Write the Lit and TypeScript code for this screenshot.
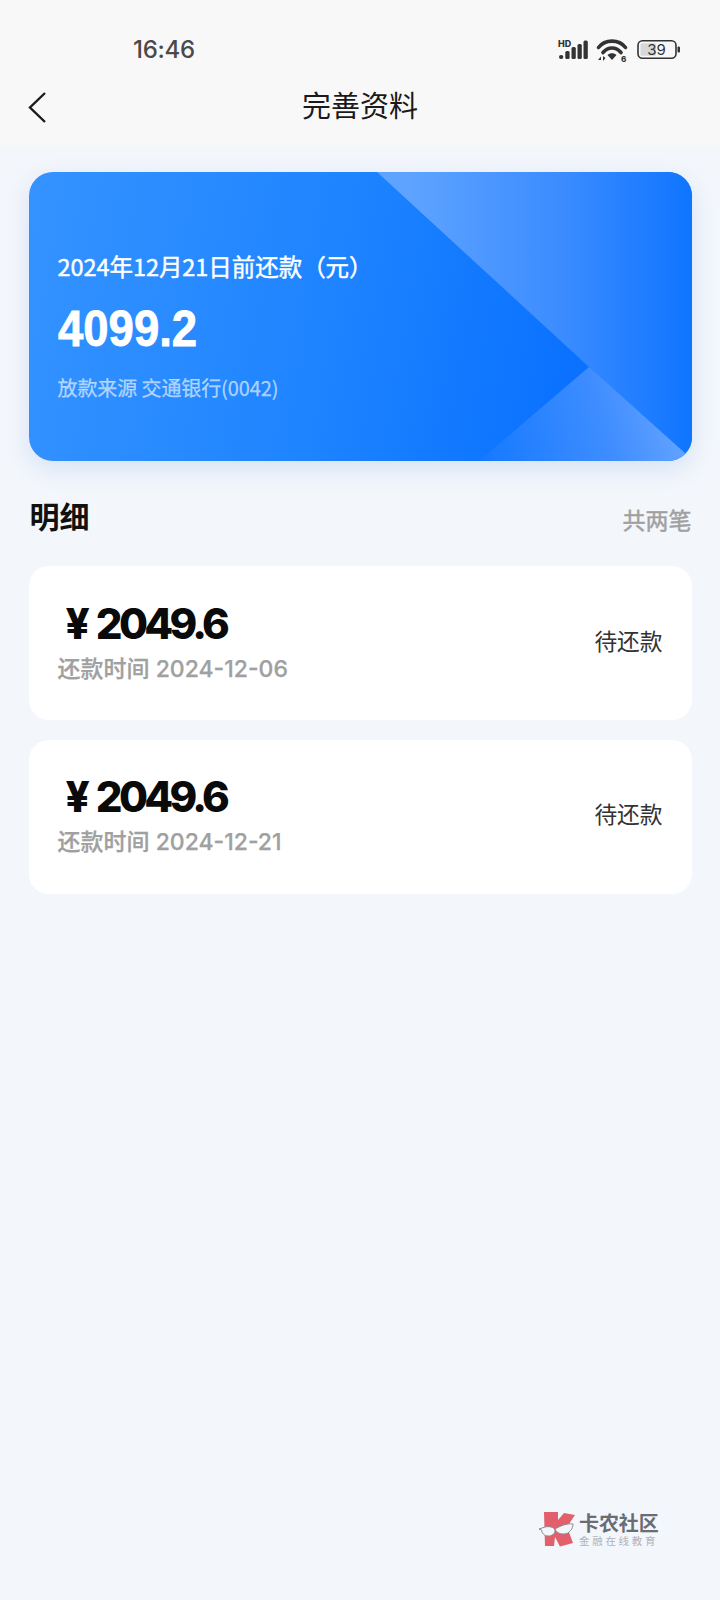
import { LitElement, html, css, svg } from "lit";
import { customElement } from "lit/decorators.js";

@customElement("app-root")
export class AppRoot extends LitElement {
  static styles = css`
    :host { display: block; min-height: 1600px; background: #f3f6fb; font-family: "Noto Sans CJK SC", "Noto Sans", sans-serif; position: relative; overflow: hidden; }
    .top { height: 145px; background: #f8f8f8; box-sizing: border-box; display: flex; flex-direction: column; }
    .status { height: 74px; display: flex; align-items: center; justify-content: space-between; padding: 26px 38px 0 133px; box-sizing: border-box; }
    .status svg { display: block; overflow: visible; }
    .time { font: 500 24px/30px Inter, Roboto, sans-serif; color: #4a4a4a; letter-spacing: -0.25px; }
    .nav { height: 60px; position: relative; display: flex; align-items: center; justify-content: center; }
    .nav svg { position: absolute; left: 27px; top: 16px; }
    .nav .title { font-size: 29px; line-height: 40px; color: #1a1a1a; font-weight: 400; }
    .main { padding: 27px 28.5px 0; display: flex; flex-direction: column; }
    .hero { height: 289px; border-radius: 24px; position: relative; overflow: hidden; color: #fff;
      background: linear-gradient(100deg, #3593ff 0%, #1e84ff 45%, #0a72ff 80%, #0a72ff 100%); box-sizing: border-box; padding: 77px 29px 0; display: flex; flex-direction: column; }
    .shadow { border-radius: 24px; box-shadow: 0 8px 24px rgba(40,110,220,.14); }
    .hero svg { position: absolute; inset: 0; }
    .hero > div { position: relative; }
    .due { font-size: 23.5px; line-height: 34px; font-weight: 400; white-space: nowrap; letter-spacing: -0.05px; -webkit-text-stroke: .45px #fff; }
    .amt { font: 700 50px/56px "Liberation Sans", sans-serif; margin-top: 18px; transform: scaleX(.91); transform-origin: left center; -webkit-text-stroke: .8px #fff; }
    .src { font-size: 20px; line-height: 28px; font-weight: 400; color: rgba(255,255,255,.6); margin-top: 17px; white-space: nowrap; letter-spacing: -0.1px; -webkit-text-stroke: .25px rgba(255,255,255,.6); }
    .head { display: flex; justify-content: space-between; align-items: flex-end; margin-top: 30px; height: 47px; padding-left: 1px; }
    .head .h { font-size: 30px; line-height: 46px; font-weight: 700; color: #111; }
    .head .c { font-size: 23px; line-height: 34px; font-weight: 400; color: #a0a0a0; margin-bottom: 2px; -webkit-text-stroke: .45px #a0a0a0; }
    .list { display: flex; flex-direction: column; gap: 19.5px; margin-top: 28px; }
    .row { height: 154px; background: #fff; border-radius: 20px; box-sizing: border-box; padding: 0 29px; display: flex; align-items: center; justify-content: space-between; }
    .money { font: 800 42px/52px Inter, "Liberation Sans", sans-serif; color: #0a0a0a; letter-spacing: -3.7px; white-space: nowrap; padding-left: 8px; display: flex; align-items: baseline; }
    .money .y { font-size: 42px; margin-right: 6px; letter-spacing: 0; }
    .when { font: 500 23px/32px Inter, "Noto Sans CJK SC", sans-serif; color: #a0a0a0; white-space: nowrap; margin-top: 3px; -webkit-text-stroke: .25px #a0a0a0; }
    .st { font-size: 22.7px; line-height: 34px; color: #333; margin-top: -5px; }
    .left { display: flex; flex-direction: column; margin-top: -4px; }
    .wm { position: absolute; left: 540px; top: 1510px; display: flex; align-items: center; gap: 4px; }
    .wm svg { display: block; overflow: visible; }
    .wm .t1 { font-size: 20px; line-height: 22px; font-weight: 700; color: #6a6d72; letter-spacing: -0.1px; white-space: nowrap; }
    .wm .t2 { font-size: 10.5px; line-height: 13px; color: #b0b3b8; letter-spacing: 2.7px; white-space: nowrap; }
    .wm .tx { display: flex; flex-direction: column; margin-left: -1px; margin-top: 2px; }
    .batt { font: 400 15px/1 Inter, sans-serif; fill: #333; }
    .hd { font: 800 9px/1 Inter, sans-serif; fill: #333; }
    .six { font: 800 8px/1 Inter, sans-serif; fill: #333; }
  `;

  private statusIcons() {
    return html`<svg width="124" height="26" viewBox="0 0 124 26">
      <text class="hd" x="0" y="10">HD</text>
      <g fill="#333">
        <rect x="1" y="18" width="4.300" height="4" rx="2"/>
        <rect x="7.300" y="14" width="4.300" height="8" rx="1.500"/>
        <rect x="13.500" y="10" width="4.300" height="12" rx="1.500"/>
        <rect x="19.500" y="7" width="4.300" height="15" rx="1.500"/>
        <rect x="25.500" y="3.500" width="4.300" height="18.500" rx="1.500"/>
      </g>
      <g fill="none" stroke="#333" stroke-width="3.600" stroke-linecap="round">
        <path d="M40.500 10.500 C47 2 61 2 67.500 10.500"/>
        <path d="M45 15.500 C50 9.500 58 9.500 63 15.500"/>
      </g>
      <path d="M49.500 18 C52 15.500 56 15.500 58.500 18 L54 23 Z" fill="#333"/>
      <path d="M40 23 l3 -3.500 v3.500 z M45 19 v5 l2.500 -3 z" fill="#333"/>
      <text class="six" x="63" y="25">6</text>
      <rect x="80" y="3.800" width="38" height="17.500" rx="4.500" fill="none" stroke="#333" stroke-width="1.600"/>
      <rect x="82.500" y="6.300" width="15.500" height="12.500" rx="1.500" fill="#d8d8d8"/>
      <text class="batt" x="98.500" y="18" text-anchor="middle">39</text>
      <rect x="119.500" y="9.500" width="2.500" height="6" rx="1" fill="#333"/>
    </svg>`;
  }

  private heroArt() {
    return svg`<svg width="663" height="289" viewBox="0 0 663 289">
      <defs>
        <linearGradient id="a" x1="349" y1="0" x2="663" y2="0" gradientUnits="userSpaceOnUse">
          <stop offset="0.1" stop-color="#5ea3ff"/>
          <stop offset="0.6" stop-color="#3a8bff"/>
          <stop offset="1" stop-color="#0f75ff"/>
        </linearGradient>
        <linearGradient id="b" x1="450" y1="289" x2="660" y2="230" gradientUnits="userSpaceOnUse">
          <stop offset="0" stop-color="#1479ff"/>
          <stop offset="0.6" stop-color="#3f8dff"/>
          <stop offset="1" stop-color="#6aa8ff"/>
        </linearGradient>
      </defs>
      <path d="M348 0 H663 V289 H657 L560 195 Z" fill="url(#a)"/>
      <path d="M560 195 L657 282 L650 289 H450 Z" fill="url(#b)"/>
    </svg>`;
  }

  private logo() {
    return html`<svg width="36" height="36" viewBox="0 0 36 36">
      <path d="M4 1 H18 V9 L24 2 L35 4 L27 16 L33 32 L20 35.500 L15 26 L14 35 H5 Z" fill="#e2606b"/>
      <path d="M-1 18 L5 16 C9 15 14 16 15 19 C15 23 12 25 8 25 C4 25 2 22 1.500 19 Z" fill="#f3f6fb" stroke="#8a8c91" stroke-width="1"/>
      <path d="M15 18 C20 15 27 12 33 13 C33 18 29 23 24 23 C19 23 16 21 15 18 Z" fill="#f3f6fb" stroke="#8a8c91" stroke-width="1"/>
    </svg>`;
  }

  render() {
    const rows = ["2024-12-06", "2024-12-21"];
    return html`
      <div class="top">
        <div class="status"><span class="time">16:46</span>${this.statusIcons()}</div>
        <div class="nav">
          <svg width="22" height="34" viewBox="0 0 22 34"><path d="M18 3 L3 17.500 L18 32" fill="none" stroke="#1a1a1a" stroke-width="2.400"/></svg>
          <span class="title">完善资料</span>
        </div>
      </div>
      <div class="main">
        <div class="shadow"><div class="hero">
          ${this.heroArt()}
          <div class="due">2024年12月21日前还款（元）</div>
          <div class="amt">4099.2</div>
          <div class="src">放款来源 交通银行(0042)</div>
        </div></div>
        <div class="head"><span class="h">明细</span><span class="c">共两笔</span></div>
        <div class="list">
          ${rows.map(d => html`<div class="row">
            <div class="left">
              <div class="money"><span class="y">¥</span>2049.6</div>
              <div class="when">还款时间 ${d}</div>
            </div>
            <div class="st">待还款</div>
          </div>`)}
        </div>
      </div>
      <div class="wm">
        ${this.logo()}
        <div class="tx"><span class="t1">卡农社区</span><span class="t2">金融在线教育</span></div>
      </div>
    `;
  }
}
